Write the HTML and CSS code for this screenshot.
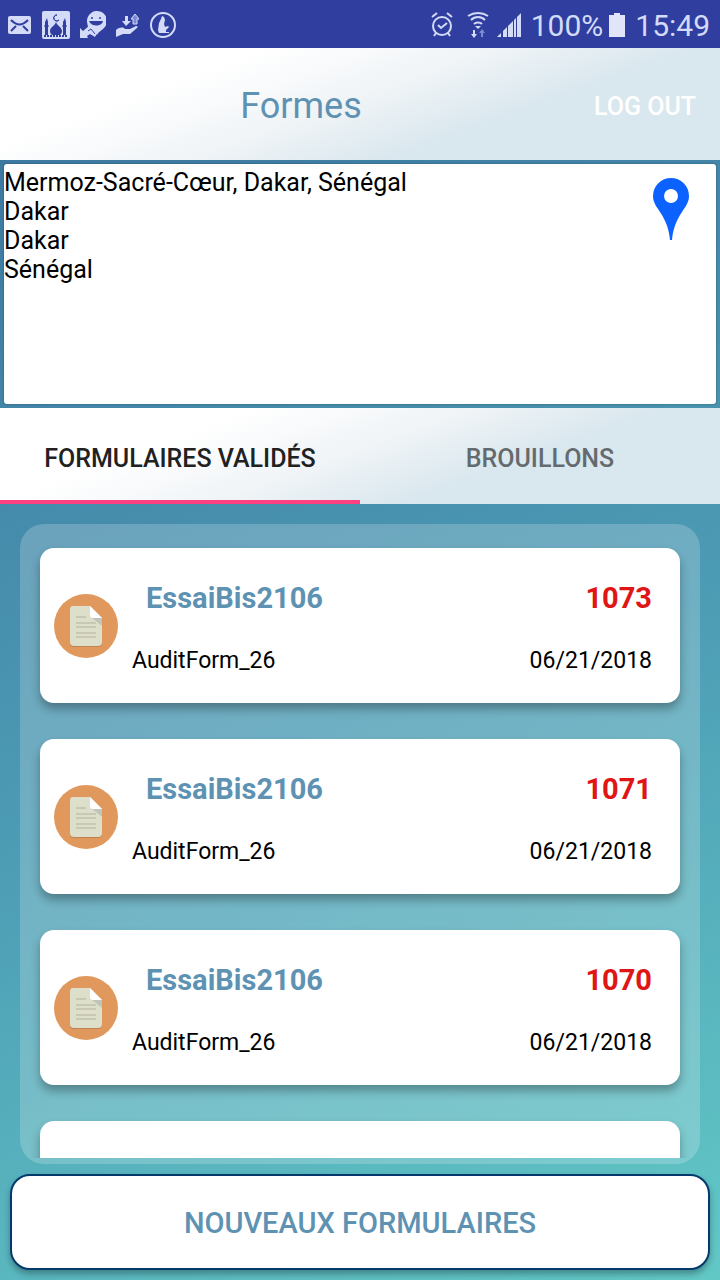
FILE: index.html
```
<!DOCTYPE html>
<html lang="fr">

<head>
  <meta charset="UTF-8">
  <meta name="viewport" content="width=device-width, initial-scale=1.0">
  <title>Formes</title>
  <link rel="stylesheet" href="styles.css">
</head>

<body>
  <svg class="sprite" aria-hidden="true">
    <symbol id="doc" viewBox="0 0 64 64">
      <circle cx="32" cy="32" r="32" fill="#e0985c" />
      <path d="M19 13h17l12 12v24a4 4 0 0 1-4 4H20a4 4 0 0 1-4-4V16a3 3 0 0 1 3-3z" fill="#c0834f" />
      <path d="M19 12h17l12 12v24a4 4 0 0 1-4 4H20a4 4 0 0 1-4-4V15a3 3 0 0 1 3-3z" fill="#dedfcb" />
      <path d="M38 24h10v8z" fill="#c0c5bc" />
      <path d="M36 12l12 12H39a3 3 0 0 1-3-3z" fill="#fff" />
      <path d="M22 23h10M22 29h20M22 33h20M22 39h20M22 43h20" stroke="#c9c8b5" stroke-width="2" />
    </symbol>
  </svg>

  <div class="app">
    <div class="status">
      <div class="statusIcons">
        <svg width="24" height="26" viewBox="0 0 24 26">
          <rect y="4" width="23" height="18" rx="2" fill="#d3dbf8" />
          <path d="M3 8c6 6 11 6 17 0M3 19l5-5M20 19l-5-5" fill="none" stroke="#303f9f" stroke-width="2" />
        </svg>
        <svg width="28" height="28" viewBox="0 0 28 28">
          <rect width="28" height="28" rx="2" fill="#d3dbf8" />
          <path d="M14 11c1 4 6 5 6 9 0 2-1 3-2 4h-8c-1-1-2-2-2-4 0-4 5-5 6-9z" fill="#303f9f" />
          <path d="M5 7l1 4v3l1 1-1 1v8H3v-8l-1-1 1-1v-3zM23 7l1 4v3l1 1-1 1v8h-3v-8l-1-1 1-1v-3z" fill="#303f9f" />
          <path d="M15 4a3 3 0 1 0 2 5 3 3 0 1 1-2-5z" fill="#303f9f" stroke="#303f9f" stroke-width="1" />
          <path d="M2 25h24" stroke="#303f9f" stroke-width="2" stroke-dasharray="2 1" />
        </svg>
        <svg width="26" height="28" viewBox="0 0 26 28">
          <path d="M7 11a10 10 0 1 1 16 7c-2 2-5 3-6 6l-4-4-5-4z" fill="#d3dbf8" />
          <path d="M9 10h14c-1 6-12 6-14 0z" fill="#303f9f" />
          <circle cx="12" cy="7" r="1" fill="#303f9f" />
          <circle cx="20" cy="7" r="1" fill="#303f9f" />
          <path d="M0 17l3 3 6-5 8 7-2 4-5-3-3 2 1 2H0z" fill="#d3dbf8" />
          <path d="M8 20l3-2 4 5" fill="none" stroke="#303f9f" stroke-width="1" />
        </svg>
        <svg width="24" height="26" viewBox="0 0 24 26">
          <path d="M0 18c4-3 7-3 9-1h5l6-3c2 0 2 1 1 2l-7 6H7l-7 3zM9 4h3v5h3l-5 5-4-5h3z" fill="#d3dbf8" />
          <path d="M17 12V7h-2l4-5 4 5h-2v5z" fill="#7f8bd0" stroke="#d3dbf8" stroke-width="1" />
        </svg>
        <svg width="26" height="28" viewBox="0 0 26 28">
          <circle cx="13" cy="14" r="12" fill="none" stroke="#d3dbf8" stroke-width="2" />
          <path d="M11 8l1-3 2 1 1 3-1 4 1 3 3-1 1 1-3 3v2h3v1H9l-1-3 1-7z" fill="#d3dbf8" />
        </svg>
      </div>
      <div class="statusInfo">
        <svg width="22" height="26" viewBox="0 0 22 26">
          <g fill="none" stroke="#d3dbf8" stroke-width="2">
            <circle cx="11" cy="14" r="9" />
            <path d="M7 13l3 3 6-5M1 5l5-4M16 1l5 4M5 21l-2 3M17 21l2 3" />
          </g>
        </svg>
        <svg class="wifi" width="22" height="26" viewBox="0 0 22 26">
          <path d="M1 4c6-4 14-4 20 0M4 8c4-4 10-4 14 0M7 12c2-2 6-2 8 0" fill="none" stroke="#d3dbf8" stroke-width="2" />
          <path d="M8 14h6l-3 3zM6 18h2v4h2l-3 4-3-4h2z" fill="#d3dbf8" />
          <path d="M14 25v-4h-2l3-4 3 4h-2v4z" fill="#7f8bd0" />
        </svg>
        <svg class="signal" width="24" height="24" viewBox="0 0 24 24">
          <path d="M0 24l4-4v4zM6 24v-6l4-4v10zM11 24V13l5-5v16zM17 24V7l2-2v19zM20 24V4l4-4v24z" fill="#d3dbf8" />
        </svg>
        <span>100%</span>
        <svg class="battery" width="16" height="24" viewBox="0 0 16 24">
          <path d="M5 0h6v2h5v22H0V2h5z" fill="#e0e5fa" />
        </svg>
        <span>15:49</span>
      </div>
    </div>

    <header class="header">
      <h1 class="title">Formes</h1>
      <button class="logout" type="button">LOG OUT</button>
    </header>

    <div class="location">
      <div class="locationBox">
        <address class="address">
          Mermoz-Sacré-Cœur, Dakar, Sénégal<br>
          Dakar<br>
          Dakar<br>
          Sénégal
        </address>
        <svg class="pin" width="36" height="62" viewBox="0 0 36 62">
          <path d="M18 0a18 18 0 0 1 18 18c0 6-3 10-7 16-6 9-9 17-10 28h-2C16 51 13 43 7 34 3 28 0 24 0 18A18 18 0 0 1 18 0z" fill="#0b62ff" />
          <circle cx="18" cy="18" r="7" fill="#fff" />
        </svg>
      </div>
    </div>

    <div class="tabs" role="tablist">
      <button class="tab active" type="button" role="tab" aria-selected="true">FORMULAIRES VALIDÉS</button>
      <button class="tab" type="button" role="tab" aria-selected="false">BROUILLONS</button>
    </div>

    <main class="panel">
      <ul class="list">
        <li class="card">
          <svg class="cardIcon"><use href="#doc" /></svg>
          <div class="cardBody">
            <div class="cardTop"><h2 class="cardName">EssaiBis2106</h2><span class="cardId">1073</span></div>
            <div class="cardBottom"><span>AuditForm_26</span><span>06/21/2018</span></div>
          </div>
        </li>
        <li class="card">
          <svg class="cardIcon"><use href="#doc" /></svg>
          <div class="cardBody">
            <div class="cardTop"><h2 class="cardName">EssaiBis2106</h2><span class="cardId">1071</span></div>
            <div class="cardBottom"><span>AuditForm_26</span><span>06/21/2018</span></div>
          </div>
        </li>
        <li class="card">
          <svg class="cardIcon"><use href="#doc" /></svg>
          <div class="cardBody">
            <div class="cardTop"><h2 class="cardName">EssaiBis2106</h2><span class="cardId">1070</span></div>
            <div class="cardBottom"><span>AuditForm_26</span><span>06/21/2018</span></div>
          </div>
        </li>
        <li class="card"></li>
      </ul>
    </main>

    <button class="newForm" type="button">NOUVEAUX FORMULAIRES</button>
  </div>
</body>

</html>
```
FILE: styles.css
```
* {
  box-sizing: border-box;
}
body {
  margin: 0;
  font-family: Roboto, "Liberation Sans", sans-serif;
  color: #000;
}
button {
  border: 0;
  background: none;
  font-family: inherit;
  cursor: pointer;
}
svg {
  display: block;
  flex-shrink: 0;
}
.sprite {
  position: absolute;
  width: 0;
  height: 0;
}
.app {
  display: flex;
  flex-direction: column;
  height: 100vh;
  background: linear-gradient(160deg, #3a709c, #4c9bb4 54%, #62c8c6);
}

/* status bar */
.status {
  display: flex;
  align-items: center;
  justify-content: space-between;
  height: 48px;
  padding: 2px 10px 0 8px;
  background: #303f9f;
  color: #d3dbf8;
  font-size: 30px;
}
.statusIcons {
  display: flex;
  align-items: center;
  gap: 10px;
}
.statusInfo {
  display: flex;
  align-items: center;
}
.wifi {
  margin: 0 8px 0 14px;
}
.signal {
  margin-right: 10px;
}
.battery {
  margin: 0 10px 0 6px;
}

/* header */
.header,
.tabs {
  background: linear-gradient(160deg, #fff 26%, #f0f4f7 48%, #d9e7ee 68%);
}
.header {
  display: grid;
  grid-template-columns: 1fr auto;
  align-items: center;
  height: 112px;
  padding: 4px 24px 0 0;
}
.title {
  margin: 0;
  padding-left: 8px;
  color: #5e92b2;
  font-size: 36px;
  font-weight: 400;
  text-align: center;
}
.logout {
  padding: 0;
  color: #fff;
  font-size: 25px;
  font-weight: 500;
}

/* location */
.location {
  padding: 4px;
}
.locationBox {
  display: flex;
  justify-content: space-between;
  height: 240px;
  padding: 4px 27px 0 0;
  border-radius: 3px;
  background: #fff;
  box-shadow: 0 0 2px rgba(0, 0, 0, 0.4);
}
.address {
  font-size: 25px;
  font-style: normal;
  line-height: 29px;
}
.pin {
  margin-top: 10px;
}

/* tabs */
.tabs {
  display: flex;
  height: 96px;
}
.tab {
  flex: 1;
  padding: 8px 0 0;
  border-bottom: 4px solid transparent;
  color: #646b6e;
  font-size: 25px;
  font-weight: 500;
}
.tab.active {
  border-color: #ff4081;
  color: #212121;
}

/* forms */
.panel {
  display: flex;
  flex: 1;
  min-height: 0;
  margin: 20px 20px 10px;
  padding-bottom: 6px;
  border-radius: 24px;
  background: rgba(255, 255, 255, 0.2);
}
.list {
  flex: 1;
  display: flex;
  flex-direction: column;
  gap: 36px;
  margin: 0;
  padding: 24px 20px 0;
  overflow: hidden;
  list-style: none;
}
.card {
  display: flex;
  flex-shrink: 0;
  align-items: center;
  gap: 14px;
  height: 155px;
  padding: 0 28px 0 14px;
  border-radius: 14px;
  background: #fff;
  box-shadow: 0 6px 10px rgba(0, 0, 0, 0.3);
}
.cardIcon {
  width: 64px;
  height: 64px;
}
.cardBody {
  flex: 1;
  padding-top: 4px;
}
.cardTop,
.cardBottom {
  display: flex;
  justify-content: space-between;
}
.cardTop {
  margin-bottom: 31px;
  padding-left: 14px;
  font-size: 29px;
  line-height: 36px;
}
.cardName {
  margin: 0;
  color: #5e92b2;
  font-size: inherit;
}
.cardId {
  color: #e01515;
  font-weight: 700;
}
.cardBottom {
  font-size: 23px;
  line-height: 28px;
}

.newForm {
  height: 96px;
  margin: 0 10px 10px;
  padding: 2px 0 0;
  border: 2px solid #033a6b;
  border-radius: 20px;
  background: #fff;
  box-shadow: 0 4px 6px rgba(0, 0, 0, 0.3);
  color: #5e92b2;
  font-size: 29px;
  font-weight: 500;
}
```
